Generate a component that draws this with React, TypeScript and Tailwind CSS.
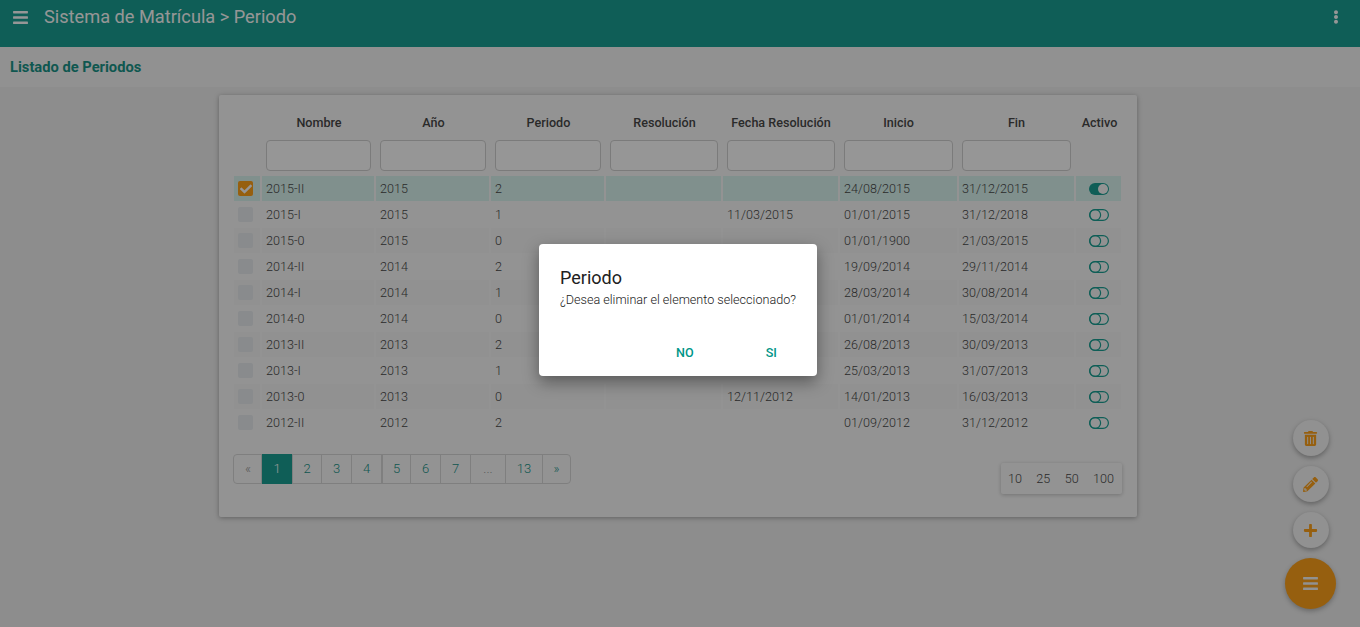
import { FaBars, FaCheck, FaEllipsisV, FaPencilAlt, FaPlus, FaTrashAlt } from 'react-icons/fa';

const rows = [
    { nombre: '2015-II', anio: '2015', periodo: '2', fecha: '', inicio: '24/08/2015', fin: '31/12/2015', activo: true },
    { nombre: '2015-I', anio: '2015', periodo: '1', fecha: '11/03/2015', inicio: '01/01/2015', fin: '31/12/2018', activo: false },
    { nombre: '2015-0', anio: '2015', periodo: '0', fecha: '', inicio: '01/01/1900', fin: '21/03/2015', activo: false },
    { nombre: '2014-II', anio: '2014', periodo: '2', fecha: '', inicio: '19/09/2014', fin: '29/11/2014', activo: false },
    { nombre: '2014-I', anio: '2014', periodo: '1', fecha: '', inicio: '28/03/2014', fin: '30/08/2014', activo: false },
    { nombre: '2014-0', anio: '2014', periodo: '0', fecha: '', inicio: '01/01/2014', fin: '15/03/2014', activo: false },
    { nombre: '2013-II', anio: '2013', periodo: '2', fecha: '', inicio: '26/08/2013', fin: '30/09/2013', activo: false },
    { nombre: '2013-I', anio: '2013', periodo: '1', fecha: '', inicio: '25/03/2013', fin: '31/07/2013', activo: false },
    { nombre: '2013-0', anio: '2013', periodo: '0', fecha: '12/11/2012', inicio: '14/01/2013', fin: '16/03/2013', activo: false },
    { nombre: '2012-II', anio: '2012', periodo: '2', fecha: '', inicio: '01/09/2012', fin: '31/12/2012', activo: false },
];

const columns = [
    { label: 'Nombre', input: 'w-[105px]', head: 'pl-[2px]', pad: 'pl-[4px]' },
    { label: 'Año', input: 'w-[106px]', head: 'pl-[2px]', pad: 'pl-[4px]' },
    { label: 'Periodo', input: 'w-[106px]', head: 'pl-[2px]', pad: 'pl-[4px]' },
    { label: 'Resolución', input: 'w-[108px]', head: 'pl-[2px]', pad: 'pl-[4px]' },
    { label: 'Fecha Resolución', input: 'w-[108px]', head: 'pl-[1px]', pad: 'pl-[4px]' },
    { label: 'Inicio', input: 'w-[109px]', head: 'pl-0', pad: 'pl-[4px]' },
    { label: 'Fin', input: 'w-[109px]', head: 'pl-0', pad: 'pl-[3px]' },
];

const pages = [
    { label: '«', w: 'w-[28px]', muted: true },
    { label: '1', w: 'w-[31px]', active: true },
    { label: '2', w: 'w-[29px]' },
    { label: '3', w: 'w-[30px]' },
    { label: '4', w: 'w-[30px]' },
    { label: '5', w: 'w-[29px]', thick: true },
    { label: '6', w: 'w-[30px]' },
    { label: '7', w: 'w-[30px]' },
    { label: '...', w: 'w-[35px]', muted: true },
    { label: '13', w: 'w-[37px]' },
    { label: '»', w: 'w-[28px]' },
];

function Toggle({ on }: { on: boolean }) {
    if (on) {
        return (
            <svg width="20" height="12" viewBox="0 0 20 12" className="mx-auto block">
                <rect x="0" y="0" width="20" height="12" rx="6" fill="#009688" />
                <circle cx="14" cy="6" r="5" fill="#fafafa" />
            </svg>
        );
    }
    return (
        <svg width="20" height="12" viewBox="0 0 20 12" className="mx-auto block" fill="none" stroke="#009688" strokeWidth="1.2">
            <rect x="0.6" y="0.6" width="18.8" height="10.8" rx="5.4" />
            <circle cx="6.2" cy="6" r="5.4" />
        </svg>
    );
}

function MiniFab({ children }: { children: React.ReactNode }) {
    return (
        <button className="flex h-9 w-9 items-center justify-center rounded-full bg-[#f5f5f5] text-[15px] text-[#ff9800] shadow-[0_2px_5px_rgba(0,0,0,0.35)]">
            {children}
        </button>
    );
}

export default function App() {
    return (
        <div className="relative h-[627px] w-[1360px] overflow-hidden bg-[#eeeeee] font-['Roboto',sans-serif]">
            <header className="flex h-[47px] items-start justify-between bg-[#009688] pl-3 pr-[17px] pt-[5px] text-white">
                <div className="flex items-center gap-[15px]">
                    <FaBars className="text-[17px]" />
                    <h1 className="text-[18.2px] leading-6">Sistema de Matrícula &gt; Periodo</h1>
                </div>
                <FaEllipsisV className="mt-[5px] text-[14px]" />
            </header>

            <div className="flex h-[40px] items-center bg-[#f5f5f5] px-[10px]">
                <h2 className="text-[14.7px] font-bold text-[#00897b]">Listado de Periodos</h2>
            </div>

            <section className="ml-[219px] mt-2 h-[422px] w-[918px] rounded-[2px] bg-[#fafafa] pl-[13px] pr-[15px] pt-[11px] shadow-[0_1px_5px_rgba(0,0,0,0.35)]">
                <table className="w-[891px] table-fixed border-separate border-spacing-x-[2px] border-spacing-y-[1px] text-[12.6px] font-light text-[#333]">
                    <colgroup>
                        <col className="w-[26px]" />
                        <col className="w-[112px]" />
                        <col className="w-[113px]" />
                        <col className="w-[113px]" />
                        <col className="w-[115px]" />
                        <col className="w-[115px]" />
                        <col className="w-[117px]" />
                        <col className="w-[115px]" />
                        <col className="w-[45px]" />
                    </colgroup>
                    <thead>
                        <tr>
                            <th></th>
                            {columns.map((c) => (
                                <th key={c.label} className={`h-[32px] p-0 text-center text-[12.6px] font-medium whitespace-nowrap text-[#333] ${c.head}`}>{c.label}</th>
                            ))}
                            <th className="p-0 pl-[2px] text-center text-[12.6px] font-medium text-[#333]">Activo</th>
                        </tr>
                        <tr>
                            <th></th>
                            {columns.map((c) => (
                                <th key={c.label} className={`h-[35px] p-0 text-left align-top ${c.pad}`}>
                                    <input className={`block h-[31px] rounded-[4px] border border-[#cccccc] bg-white ${c.input}`} />
                                </th>
                            ))}
                            <th></th>
                        </tr>
                    </thead>
                    <tbody>
                        {rows.map((r, i) => {
                            const bg = i === 0 ? 'bg-[#d6f3ef]' : i % 2 === 0 ? 'bg-[#f5f5f5]' : '';
                            return (
                                <tr key={r.nombre} className="h-[25px]">
                                    <td className={`p-0 ${bg}`}>
                                        {r.activo ? (
                                            <span className="ml-[4px] flex h-[15px] w-[15px] items-center justify-center rounded-[2px] bg-[#ff9800] text-[12px] text-white">
                                                <FaCheck />
                                            </span>
                                        ) : (
                                            <span className="ml-[4px] block h-[15px] w-[15px] rounded-[2px] bg-[#e6eaee]" />
                                        )}
                                    </td>
                                    <td className={`p-0 pl-[4px] pt-[2px] ${bg}`}>{r.nombre}</td>
                                    <td className={`p-0 pl-[4px] pt-[2px] ${bg}`}>{r.anio}</td>
                                    <td className={`p-0 pl-[4px] pt-[2px] ${bg}`}>{r.periodo}</td>
                                    <td className={`p-0 pl-[4px] pt-[2px] ${bg}`}></td>
                                    <td className={`p-0 pl-[4px] pt-[2px] ${bg}`}>{r.fecha}</td>
                                    <td className={`p-0 pl-[4px] pt-[2px] ${bg}`}>{r.inicio}</td>
                                    <td className={`p-0 pl-[3px] pt-[2px] ${bg}`}>{r.fin}</td>
                                    <td className={`p-0 ${bg}`}><Toggle on={r.activo} /></td>
                                </tr>
                            );
                        })}
                    </tbody>
                </table>

                <div className="mt-[18px] flex items-start justify-between pl-px">
                    <nav className="flex h-[30px] rounded-[4px] border border-[#d4d4d4] text-[13px] font-light">
                        {pages.map((p, i) => (
                            <span
                                key={p.label}
                                className={`flex items-center justify-center ${p.w} ${p.thick ? 'border-l-2 border-[#d4d4d4]' : i > 0 ? 'border-l border-[#d4d4d4]' : ''} ${p.active ? '-my-px -ml-px bg-[#009688] text-white' : p.muted ? 'text-[#888]' : 'text-[#00897b]'}`}
                            >
                                {p.label}
                            </span>
                        ))}
                    </nav>
                    <div className="mt-[9px] flex h-[31px] w-[121px] items-center justify-between rounded-[2px] bg-[#fafafa] pl-[7px] pr-[8px] pt-px text-[12.6px] font-light text-[#333] shadow-[0_1px_4px_rgba(0,0,0,0.25)]">
                        <span>10</span>
                        <span>25</span>
                        <span>50</span>
                        <span>100</span>
                    </div>
                </div>
            </section>

            <div className="absolute right-[24px] top-[420px] flex w-[51px] flex-col items-center">
                <div className="flex flex-col gap-[10px]">
                    <MiniFab><FaTrashAlt /></MiniFab>
                    <MiniFab><FaPencilAlt /></MiniFab>
                    <MiniFab><FaPlus /></MiniFab>
                </div>
                <button className="mt-[10px] flex h-[51px] w-[51px] items-center justify-center rounded-full bg-[#ff9800] text-[17px] text-[#f5f5f5] shadow-[0_2px_5px_rgba(0,0,0,0.3)]">
                    <FaBars />
                </button>
            </div>

            <div className="absolute inset-0 bg-[#1f1f1f]/47" />

            <div className="absolute left-[539px] top-[244px] h-[132px] w-[278px] rounded-[4px] bg-white px-[21px] pt-[23px] shadow-[0_6px_16px_rgba(0,0,0,0.4)]">
                <h3 className="text-[18px] leading-[22px] font-normal text-[#212121]">Periodo</h3>
                <p className="mt-[1px] text-[12.6px] leading-[20px] font-light whitespace-nowrap text-[#212121]">¿Desea eliminar el elemento seleccionado?</p>
                <div className="mt-[34px] flex text-[12.6px] font-medium text-[#009688]">
                    <span className="ml-[116px]">NO</span>
                    <span className="ml-[72px]">SI</span>
                </div>
            </div>
        </div>
    );
}
